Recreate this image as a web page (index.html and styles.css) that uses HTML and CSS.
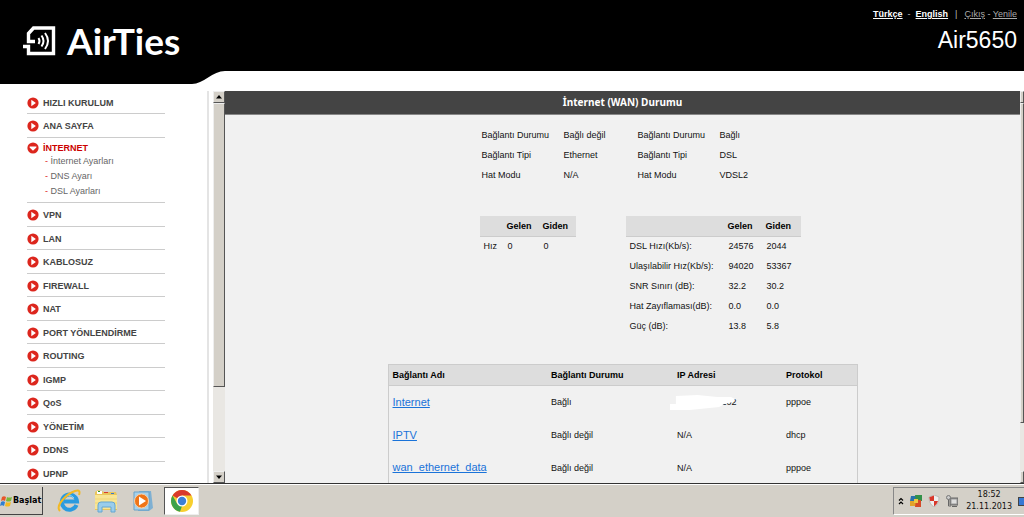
FILE: index.html
```html
<!DOCTYPE html>
<html lang="tr">
<head>
<meta charset="utf-8">
<title>AirTies Air5650</title>
<link rel="stylesheet" href="styles.css">
</head>
<body>
<svg class="defs" aria-hidden="true">
  <symbol id="go" viewBox="0 0 12 12"><circle cx="6" cy="6" r="5.6" fill="#dc261d"/><path d="M4.3 2.8 8.9 6 4.3 9.2z" fill="#fff"/></symbol>
  <symbol id="open" viewBox="0 0 12 12"><circle cx="6" cy="6" r="5.6" fill="#dc261d"/><path d="M2.6 4.6h6.8v1L6 8.8 2.6 5.6z" fill="#fff"/></symbol>
</svg>
<header class="header">
  <div class="brand">
    <svg class="brand-mark" viewBox="0 0 33 30" fill="none" stroke="#fff"><path d="M12 15.500H5.500V7.500L10.500 2H30.500V27.500H5.500V20.500H0" stroke-width="3.400"/><path d="M15.500 12q2 3 0 6M18.500 9.500q4 5.500 0 11M22 7q6 8 0 16" stroke-width="2"/></svg>
    <span class="brand-name">AirTies</span>
  </div>
  <div class="account">
    <div class="links"><a class="lang" href="#">Türkçe</a><span>-</span><a class="lang" href="#">English</a><span class="bar">|</span><span class="session"><a href="#">Çıkış</a> - <a href="#">Yenile</a></span></div>
    <div class="model">Air5650</div>
  </div>
</header>
<svg class="curve" viewBox="0 0 225 20"><path d="M0 0H225C213 0 203 13 192 13H0z" fill="#000"/></svg>
<div class="body">
  <nav class="sidebar">
    <ul class="menu">
      <li><a href="#"><svg><use href="#go"/></svg>HIZLI KURULUM</a></li>
      <li><a href="#"><svg><use href="#go"/></svg>ANA SAYFA</a></li>
      <li class="current"><a href="#"><svg><use href="#open"/></svg>İNTERNET</a>
        <ul class="submenu">
          <li><a href="#">İnternet Ayarları</a></li>
          <li><a href="#">DNS Ayarı</a></li>
          <li><a href="#">DSL Ayarları</a></li>
        </ul>
      </li>
      <li><a href="#"><svg><use href="#go"/></svg>VPN</a></li>
      <li><a href="#"><svg><use href="#go"/></svg>LAN</a></li>
      <li><a href="#"><svg><use href="#go"/></svg>KABLOSUZ</a></li>
      <li><a href="#"><svg><use href="#go"/></svg>FIREWALL</a></li>
      <li><a href="#"><svg><use href="#go"/></svg>NAT</a></li>
      <li><a href="#"><svg><use href="#go"/></svg>PORT YÖNLENDİRME</a></li>
      <li><a href="#"><svg><use href="#go"/></svg>ROUTING</a></li>
      <li><a href="#"><svg><use href="#go"/></svg>IGMP</a></li>
      <li><a href="#"><svg><use href="#go"/></svg>QoS</a></li>
      <li><a href="#"><svg><use href="#go"/></svg>YÖNETİM</a></li>
      <li><a href="#"><svg><use href="#go"/></svg>DDNS</a></li>
      <li><a href="#"><svg><use href="#go"/></svg>UPNP</a></li>
    </ul>
  </nav>
  <div class="scroll">
    <button class="scroll-button" aria-label="Yukarı"><svg viewBox="0 0 6 4"><path d="M3 0 6 3.500H0z"/></svg></button>
    <div class="thumb"></div>
    <div class="track"></div>
    <button class="scroll-button" aria-label="Aşağı"><svg viewBox="0 0 6 4"><path d="M3 4 6 .5H0z"/></svg></button>
  </div>
  <main class="main">
    <h1>İnternet (WAN) Durumu</h1>
    <div class="content">
      <div class="pair">
        <table class="info">
          <tr><th>Bağlantı Durumu</th><td>Bağlı değil</td></tr>
          <tr><th>Bağlantı Tipi</th><td>Ethernet</td></tr>
          <tr><th>Hat Modu</th><td>N/A</td></tr>
        </table>
        <table class="info">
          <tr><th>Bağlantı Durumu</th><td>Bağlı</td></tr>
          <tr><th>Bağlantı Tipi</th><td>DSL</td></tr>
          <tr><th>Hat Modu</th><td>VDSL2</td></tr>
        </table>
      </div>
      <div class="pair rates-pair">
        <table class="rates small">
          <thead><tr><th></th><th>Gelen</th><th>Giden</th></tr></thead>
          <tbody><tr><td>Hız</td><td>0</td><td>0</td></tr></tbody>
        </table>
        <table class="rates large">
          <thead><tr><th></th><th>Gelen</th><th>Giden</th></tr></thead>
          <tbody>
            <tr><td>DSL Hızı(Kb/s):</td><td>24576</td><td>2044</td></tr>
            <tr><td>Ulaşılabilir Hız(Kb/s):</td><td>94020</td><td>53367</td></tr>
            <tr><td>SNR Sınırı (dB):</td><td>32.2</td><td>30.2</td></tr>
            <tr><td>Hat Zayıflaması(dB):</td><td>0.0</td><td>0.0</td></tr>
            <tr><td>Güç (dB):</td><td>13.8</td><td>5.8</td></tr>
          </tbody>
        </table>
      </div>
      <table class="connections">
        <thead><tr><th>Bağlantı Adı</th><th>Bağlantı Durumu</th><th>IP Adresi</th><th>Protokol</th></tr></thead>
        <tbody>
          <tr><td><a href="#">Internet</a></td><td>Bağlı</td><td><span class="address">.202<svg class="mask" viewBox="0 0 66 15" preserveAspectRatio="none"><path d="M6 1 28 0 48 2H62L66 4 64 7 55 9 50 12 20 15H0V9H6z" fill="#fff"/></svg></span></td><td>pppoe</td></tr>
          <tr><td><a href="#">IPTV</a></td><td>Bağlı değil</td><td>N/A</td><td>dhcp</td></tr>
          <tr><td><a href="#">wan_ethernet_data</a></td><td>Bağlı değil</td><td>N/A</td><td>pppoe</td></tr>
        </tbody>
      </table>
    </div>
  </main>
  <div class="scroll outer">
    <div class="scroll-button"></div>
    <div class="thumb"></div>
    <div class="track"></div>
    <div class="scroll-button"></div>
  </div>
</div>
<footer class="taskbar">
  <button class="start"><svg viewBox="0 0 12 12"><path d="M2 2q2-1.500 4 0L5 6Q3 4.500 1 6z" fill="#e8562a"/><path d="M7 2q2 1.200 5 0l-1 4q-3 1-5 0z" fill="#7ab83a"/><path d="M1 7q2-1.500 4 0l-1 4q-2-1.500-4 0z" fill="#2f7fd0"/><path d="M6 7q2 1.200 5 0l-1 4q-3 1-5 0z" fill="#f5b91f"/></svg>Başlat</button>
  <button class="task" aria-label="Internet Explorer"><svg viewBox="0 0 24 24"><path d="M19.500 16A7.600 7.600 0 1 1 20 12.500H7" fill="none" stroke="#2a9be0" stroke-width="4"/><path d="M6.500 10.500A6 6 0 0 1 17 9" fill="none" stroke="#8fdcfb" stroke-width="1"/><path d="M3 22C-2 17 9 5 18 2c5-1.500 5 1 4 4" fill="none" stroke="#f2b925" stroke-width="2"/></svg></button>
  <button class="task" aria-label="Gezgin"><svg viewBox="0 0 24 24"><path d="M1 3 4 1l4 1 2 1h12l1 3v15H1z" fill="#e9c65c"/><path d="M3 2h5v3H3z" fill="#fff"/><path d="M4 2h2v1H4z" fill="#2a9c35"/><path d="M10 3h4v1h-4z" fill="#d83b2c"/><path d="M17 4h3v1h-3z" fill="#3979cf"/><path d="M1 6h22v14H1z" fill="#f8e596"/><path d="M1 10h22M1 14h22" stroke="#f0d474"/><path d="M4 23v-7q0-3 3-3h11q3 0 3 3v7h-4v-5H8v5z" fill="#9acdec" stroke="#64a6d2"/></svg></button>
  <button class="task" aria-label="Media Player"><svg viewBox="0 0 24 24"><path d="M8 2h12l2 17-4 3H7z" fill="#7fb0d2"/><path d="M3 3h15v18H3z" fill="#a6d2ed" stroke="#6ba2c8"/><circle cx="10.500" cy="12" r="7" fill="#ef7518" stroke="#fbd0a4"/><path d="M8 7.500 15 12l-7 4.500z" fill="#fff"/></svg></button>
  <button class="task active" aria-label="Chrome"><svg viewBox="0 0 24 24"><circle cx="12" cy="12" r="11" fill="#f7cf2f"/><path d="M12 12 2.500 6.500A11 11 0 0 1 21.500 6.500H12z" fill="#d93a2b"/><path d="M2.500 6.500 7.300 15 12 17l-2 5.800A11 11 0 0 1 2.500 6.500z" fill="#3da14b"/><circle cx="12" cy="12" r="5.500" fill="#fff"/><circle cx="12" cy="12" r="4.200" fill="#3c7fd6"/></svg></button>
  <div class="tray">
    <svg class="chevrons" viewBox="0 0 6 8" fill="none" stroke="#000" stroke-width="1.200"><path d="M1 3.500 3 1.500 5 3.500M1 7 3 5 5 7"/></svg>
    <svg viewBox="0 0 12 12"><path d="M1 1h5v5H0z" fill="#2872ad"/><path d="M5 0h7v6H6z" fill="#329148"/><path d="M0 6h6v5H0z" fill="#e1a32a"/><path d="M6 5h5v7H5z" fill="#d54b27"/><path d="M4 4h4v4H4z" fill="#eec843"/></svg>
    <svg viewBox="0 0 12 12"><path d="M1 2 6 0l5 2q0 7-5 10Q1 9 1 2z" fill="#eee" stroke="#999" stroke-width=".5"/><path d="M1.300 2.200 6 .4V6H2zM6 6h4Q9 9.500 6 11.500z" fill="#d8372b"/></svg>
    <svg viewBox="0 0 12 12"><path d="M4 3h8v7H4z" fill="#999" stroke="#666"/><path d="M5.500 4.500h5v4h-5z" fill="#ddd"/><path d="M6 11.500h5M2.500 4v7H5" stroke="#666" fill="none"/><circle cx="2.500" cy="2.500" r="2" fill="#ccc" stroke="#777"/></svg>
    <time class="clock" datetime="2013-11-21T18:52">18:52<br>21.11.2013</time>
    <span class="desktop"></span>
  </div>
</footer>
</body>
</html>
```
FILE: styles.css
```css
* { box-sizing: border-box; }
body {
  margin: 0;
  height: 100vh;
  display: flex;
  flex-direction: column;
  overflow: hidden;
  background: #fff;
  color: #111;
  font: 9px/12px "Liberation Sans", Arial, sans-serif;
}
ul { list-style: none; margin: 0; padding: 0; }
table { border-collapse: collapse; }
th, td { padding: 0; text-align: left; }
button { font: inherit; padding: 0; border: 0; background: none; }
.defs { display: none; }

.header {
  display: flex;
  justify-content: space-between;
  background: #000;
  color: #fff;
  flex: none;
}
.brand { display: flex; align-items: flex-start; padding: 26px 0 15px 23px; gap: 11px; }
.brand-mark { width: 33px; height: 30px; }
.brand-name { font: 700 37px/30px Lato, "Open Sans", sans-serif; }
.account { padding: 8px 7px 0 0; text-align: right; }
.links { display: flex; justify-content: flex-end; gap: 5px; color: #bbb; }
.links a { color: #aaa; }
.links .lang { color: #fff; font-weight: bold; }
.bar { padding: 0 2px; }
.model { font-size: 23px; line-height: 28px; margin-top: 6px; }
.curve { width: 225px; height: 20px; flex: none; display: block; }

.body { flex: 1; min-height: 0; display: flex; }
.sidebar {
  width: 209px;
  flex: none;
  overflow: hidden;
  padding: 0 42px 0 27px;
  border-right: 2px solid #e4e4e4;
}
.menu > li { height: 23px; border-bottom: 1px solid #ccc; }
.menu > li:nth-child(even) { height: 24px; }
.menu > li > a {
  display: flex;
  align-items: center;
  gap: 4px;
  height: 23px;
  color: #444;
  font-weight: bold;
  text-decoration: none;
}
.menu svg { width: 12px; height: 12px; }
.menu > .current { height: 65px; }
.menu > .current > a { color: #c00; height: 16px; padding-top: 3px; }
.submenu li { height: 15px; line-height: 15px; padding-left: 18px; }
.submenu li::before { content: "- "; color: #d22; }
.submenu a { color: #666; text-decoration: none; }

.scroll {
  width: 12px;
  margin-left: 4px;
  flex: none;
  display: flex;
  flex-direction: column;
  background: #e9e7e3;
}
.scroll-button, .scroll .thumb {
  background: #d4d0c8;
  border: 1px solid #555;
  border-top-color: #eee;
  border-left-color: #eee;
}
.scroll-button { height: 12px; flex: none; display: grid; place-items: center; }
.scroll-button svg { width: 6px; height: 4px; }
.thumb { flex: 77; }
.track { flex: 23; }
.outer { width: 4px; margin-left: 0; overflow: hidden; }
.outer .thumb { flex: 87; }
.outer .track { flex: 13; }

.main { flex: 1; min-width: 0; overflow: hidden; background: #f1f1f1; }
h1 {
  margin: 0;
  background: #444;
  color: #fff;
  text-align: center;
  font: bold 10px/23px "Noto Sans", "Open Sans", sans-serif;
  border-bottom: 1px solid #888;
}
.content { width: 470px; margin: 0 auto; padding-top: 10px; }
.pair { display: flex; padding-left: 92px; }
.info th, .info td { height: 20px; font-weight: normal; padding-left: 2px; }
.info th { width: 82px; }
.info td { width: 74px; }
.rates-pair { margin-top: 31px; gap: 50px; align-items: flex-start; }
.rates { table-layout: fixed; }
.rates th { height: 20px; background: #ddd; color: #000; border-bottom: 1px solid #ccc; }
.rates td { height: 20px; padding-left: 1px; }
.rates td:first-child { padding-left: 4px; }
.small { width: 96px; }
.small th:first-child { width: 27px; }
.small th:nth-child(2) { width: 36px; }
.large { width: 175px; }
.large th:first-child { width: 102px; }
.large th:nth-child(2) { width: 38px; }
.connections { width: 100%; table-layout: fixed; margin-top: 28px; border: 1px solid #ccc; }
.connections th { height: 21px; padding-bottom: 1px; background: #ddd; color: #000; border-bottom: 1px solid #ccc; }
.connections td { height: 33px; }
.connections th:first-child, .connections td:first-child { width: 163px; padding-left: 4px; }
.connections th:nth-child(2) { width: 126px; }
.connections th:nth-child(3) { width: 109px; }
.connections a { color: #1a73d9; font-size: 11px; }
.address { position: relative; display: inline-block; padding-left: 42px; }
.mask { position: absolute; left: -7px; top: -1px; width: 65px; height: 15px; }

.taskbar {
  height: 34px;
  flex: none;
  display: flex;
  align-items: stretch;
  background: #d4d0c8;
  border-top: 1px solid #333;
  box-shadow: inset 0 1px #fff;
  padding-top: 3px;
}
.start {
  width: 43px;
  margin-bottom: 2px;
  display: flex;
  align-items: center;
  gap: 1px;
  font: bold 8px/12px "DejaVu Sans", sans-serif;
  border-right: 1px solid #444;
  border-bottom: 1px solid #444;
}
.start svg { width: 12px; height: 12px; }
.task { width: 35px; margin: 0 0 2px 2px; display: grid; place-items: center; }
.task:nth-child(2) { margin-left: 8px; }
.task svg { width: 24px; height: 24px; }
.active { margin-left: 4px; background: #fff; border: 1px solid #555; border-right-color: #eee; border-bottom-color: #eee; }
.tray {
  margin: 0 0 2px auto;
  display: flex;
  align-items: center;
  gap: 6px;
  padding-left: 4px;
  border: 1px solid #888;
  border-right: 0;
  border-bottom-color: #fff;
}
.tray svg { width: 12px; height: 12px; }
.tray .chevrons { width: 6px; height: 8px; }
.clock { font: 8px/12px "DejaVu Sans", sans-serif; text-align: center; padding-left: 2px; }
.desktop { width: 6px; height: 9px; background: #3778d4; border: 1px solid #444; border-right: 0; }
```
